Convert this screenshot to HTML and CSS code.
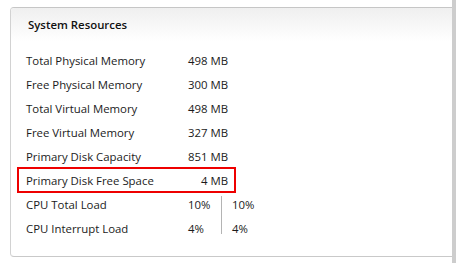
FILE: index.html
```html
<!DOCTYPE html>
<html lang="en">
<head>
<meta charset="UTF-8">
<title>System Resources</title>
<link rel="stylesheet" href="styles.css">
</head>
<body>
<div class="page">
    <div class="main">
        <div class="panel">
            <div class="panel-header">System Resources</div>
            <div class="panel-body">
                <div class="row">
                    <span class="label">Total Physical Memory</span>
                    <span class="value">498 MB</span>
                </div>
                <div class="row">
                    <span class="label">Free Physical Memory</span>
                    <span class="value">300 MB</span>
                </div>
                <div class="row">
                    <span class="label">Total Virtual Memory</span>
                    <span class="value">498 MB</span>
                </div>
                <div class="row">
                    <span class="label">Free Virtual Memory</span>
                    <span class="value">327 MB</span>
                </div>
                <div class="row">
                    <span class="label">Primary Disk Capacity</span>
                    <span class="value">851 MB</span>
                </div>
                <div class="row highlight">
                    <span class="label">Primary Disk Free Space</span>
                    <span class="value">4 MB</span>
                </div>
                <div class="cpu">
                    <div class="cpu-labels">
                        <div class="row">CPU Total Load</div>
                        <div class="row">CPU Interrupt Load</div>
                    </div>
                    <div class="cpu-col">
                        <div class="row">10%</div>
                        <div class="row">4%</div>
                    </div>
                    <div class="cpu-divider"></div>
                    <div class="cpu-col second">
                        <div class="row">10%</div>
                        <div class="row">4%</div>
                    </div>
                </div>
            </div>
        </div>
    </div>
    <div class="scrollbar"></div>
</div>
</body>
</html>
```
FILE: styles.css
```css
body {
    margin: 0;
    padding: 0;
    background-color: #ffffff;
    font-family: "Open Sans", "Noto Sans", sans-serif;
    font-size: 11.4px;
    color: #1b1b1b;
}

.page {
    display: flex;
    height: 263px;
    overflow: hidden;
}

.main {
    flex: 1;
    overflow: hidden;
    padding: 7px 0 0 10px;
}

.scrollbar {
    width: 4px;
    background-color: #cdcdcd;
}

.panel {
    height: 248px;
    border: 1px solid #d2d2d2;
    border-top-color: #c6c6c6;
    border-bottom-color: #c9c9c9;
    border-right: none;
    border-radius: 4px 0 0 4px;
}

.panel-header {
    height: 33px;
    line-height: 33px;
    padding-left: 17px;
    font-weight: 600;
    color: #111111;
    background: linear-gradient(#efefef, #ffffff);
    border-radius: 4px 0 0 0;
}

.panel-body {
    padding: 7px 0 0 7px;
}

.row {
    display: flex;
    align-items: center;
    height: 24px;
    width: 217px;
    padding: 0 7px 0 8px;
    box-sizing: border-box;
    white-space: nowrap;
}

.label {
    flex: 1;
}

.value {
    text-align: right;
}

.highlight {
    outline: 2px solid #ee0000;
    outline-offset: -1px;
}

.cpu {
    display: flex;
}

.cpu .row {
    width: auto;
    padding: 0;
}

.cpu-labels {
    width: 170px;
    padding-left: 8px;
    box-sizing: border-box;
}

.cpu-col {
    width: 33px;
}

.cpu-col.second {
    padding-left: 10px;
}

.cpu-divider {
    width: 1px;
    margin: 4px 0 6px;
    background-color: #b4b4b4;
}
```
